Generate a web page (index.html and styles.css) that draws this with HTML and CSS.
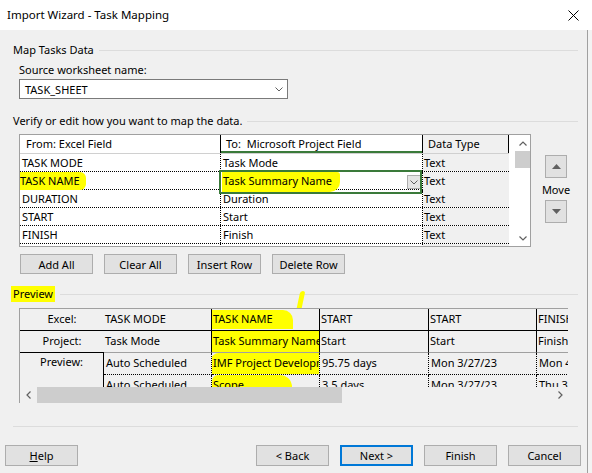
FILE: index.html
```html
<!DOCTYPE html>
<html lang="en">
<head>
    <meta charset="UTF-8">
    <title>Import Wizard - Task Mapping</title>
    <link rel="stylesheet" href="styles.css">
</head>
<body>
    <div class="titlebar">
        <span class="title">Import Wizard - Task Mapping</span>
        <svg class="close" width="11" height="11" viewBox="0 0 11 11"><path d="M0.5 0.5 L10.5 10.5 M10.5 0.5 L0.5 10.5" stroke="#000" stroke-width="1"/></svg>
    </div>

    <div class="dialog">
        <!-- Map Tasks Data -->
        <div class="group-label"><span>Map Tasks Data</span><div class="rule"></div></div>
        <div class="field-label">Source worksheet name:</div>
        <div class="select">
            <span>TASK_SHEET</span>
            <svg width="8" height="5" viewBox="0 0 8 5"><path d="M0.5 0.5 L4 4 L7.5 0.5" fill="none" stroke="#606060"/></svg>
        </div>

        <div class="group-label verify"><span>Verify or edit how you want to map the data.</span><div class="rule"></div></div>

        <div class="map-area">
            <div class="map-grid">
                <div class="map-cols">
                    <div class="map-row head">
                        <div class="cell">From: Excel Field</div>
                        <div class="cell active-col">To:&nbsp; Microsoft Project Field</div>
                        <div class="cell type">Data Type</div>
                    </div>
                    <div class="map-row">
                        <div class="cell">TASK MODE</div>
                        <div class="cell">Task Mode</div>
                        <div class="cell type">Text</div>
                    </div>
                    <div class="map-row">
                        <div class="cell"><span class="hl hl-name">TASK NAME</span></div>
                        <div class="cell selected">
                            <span class="hl hl-summary">Task Summary Name</span>
                            <span class="cell-drop"><svg width="8" height="5" viewBox="0 0 8 5"><path d="M0.5 0.5 L4 4 L7.5 0.5" fill="none" stroke="#606060"/></svg></span>
                        </div>
                        <div class="cell type">Text</div>
                    </div>
                    <div class="map-row">
                        <div class="cell">DURATION</div>
                        <div class="cell">Duration</div>
                        <div class="cell type">Text</div>
                    </div>
                    <div class="map-row">
                        <div class="cell">START</div>
                        <div class="cell">Start</div>
                        <div class="cell type">Text</div>
                    </div>
                    <div class="map-row">
                        <div class="cell">FINISH</div>
                        <div class="cell">Finish</div>
                        <div class="cell type">Text</div>
                    </div>
                    <div class="map-row">
                        <div class="cell"></div>
                        <div class="cell"></div>
                        <div class="cell type"></div>
                    </div>
                </div>
                <div class="vscroll">
                    <div class="arrow"><svg width="8" height="5" viewBox="0 0 8 5"><path d="M0.5 4.5 L4 1 L7.5 4.5" fill="none" stroke="#606060" stroke-width="1.2"/></svg></div>
                    <div class="thumb"></div>
                    <div class="track"></div>
                    <div class="arrow"><svg width="8" height="5" viewBox="0 0 8 5"><path d="M0.5 0.5 L4 4 L7.5 0.5" fill="none" stroke="#606060" stroke-width="1.2"/></svg></div>
                </div>
            </div>

            <div class="move">
                <div class="move-btn"><svg width="9" height="5" viewBox="0 0 9 5"><path d="M0 5 L4.5 0 L9 5 Z" fill="#606060"/></svg></div>
                <div class="move-label">Move</div>
                <div class="move-btn"><svg width="9" height="5" viewBox="0 0 9 5"><path d="M0 0 L4.5 5 L9 0 Z" fill="#606060"/></svg></div>
            </div>
        </div>

        <div class="grid-buttons">
            <button>Add All</button>
            <button>Clear All</button>
            <button>Insert Row</button>
            <button>Delete Row</button>
        </div>

        <!-- Preview -->
        <div class="group-label preview-label"><span class="hl">Preview</span><div class="rule"></div></div>

        <div class="preview-wrap">
            <div class="marker-tick"></div>
            <div class="preview-grid">
                <div class="pv-row excel">
                    <div class="pv-cell label">Excel:</div>
                    <div class="pv-cell">TASK MODE</div>
                    <div class="pv-cell"><span class="hl hl-pv-name">TASK NAME</span></div>
                    <div class="pv-cell">START</div>
                    <div class="pv-cell">START</div>
                    <div class="pv-cell last">FINISH</div>
                </div>
                <div class="pv-row project">
                    <div class="pv-cell label">Project:</div>
                    <div class="pv-cell">Task Mode</div>
                    <div class="pv-cell hl">Task Summary Name</div>
                    <div class="pv-cell">Start</div>
                    <div class="pv-cell">Start</div>
                    <div class="pv-cell last">Finish</div>
                </div>
                <div class="pv-body">
                    <div class="pv-cell label">Preview:</div>
                    <div class="pv-cell">Auto Scheduled</div>
                    <div class="pv-cell"><span class="hl hl-imf">IMF Project Development</span></div>
                    <div class="pv-cell">95.75 days</div>
                    <div class="pv-cell">Mon 3/27/23</div>
                    <div class="pv-cell last">Mon 4/3/23</div>
                    <div class="pv-cell">Auto Scheduled</div>
                    <div class="pv-cell"><span class="hl hl-scope">Scope</span></div>
                    <div class="pv-cell">3.5 days</div>
                    <div class="pv-cell">Mon 3/27/23</div>
                    <div class="pv-cell last">Thu 3/30/23</div>
                </div>
                <div class="hscroll">
                    <div class="arrow"><svg width="5" height="8" viewBox="0 0 5 8"><path d="M4.5 0.5 L1 4 L4.5 7.5" fill="none" stroke="#606060" stroke-width="1.2"/></svg></div>
                    <div class="thumb"></div>
                    <div class="track"></div>
                    <div class="arrow"><svg width="5" height="8" viewBox="0 0 5 8"><path d="M0.5 0.5 L4 4 L0.5 7.5" fill="none" stroke="#606060" stroke-width="1.2"/></svg></div>
                </div>
            </div>
        </div>

        <div class="footer-rule"></div>

        <div class="footer">
            <button><u>H</u>elp</button>
            <button class="back">&lt; Back</button>
            <button class="default">Next &gt;</button>
            <button>Finish</button>
            <button>Cancel</button>
        </div>
    </div>
</body>
</html>
```

FILE: styles.css
```css
body {
    margin: 0;
    width: 592px;
    height: 473px;
    overflow: hidden;
    background: #f3f3f3;
    font-family: "Segoe UI", "Noto Sans", sans-serif;
    font-size: 11px;
    color: #000;
}
.titlebar {
    height: 30px;
    background: #fff;
    display: flex;
    align-items: center;
    justify-content: space-between;
    padding: 0 13px 0 7px;
}
.title {
    font-size: 11.5px;
    line-height: 16px;
}
.close {
    display: block;
}
.dialog {
    width: 588px;
    height: 443px;
    box-sizing: border-box;
    padding: 12px 9px 0 13px;
    background: #f0f0f0;
    border-right: 1px solid #a0a0a0;
}
.group-label {
    display: flex;
    align-items: center;
    height: 16px;
    line-height: 16px;
    white-space: nowrap;
}
.group-label .rule {
    flex: 1;
    height: 1px;
    margin-left: 5px;
    background: #dcdcdc;
}
.field-label {
    margin: 4px 0 0 6px;
    line-height: 16px;
}
.select {
    width: 269px;
    height: 20px;
    box-sizing: border-box;
    margin: 1px 0 0 6px;
    padding: 0 4px 0 5px;
    display: flex;
    align-items: center;
    justify-content: space-between;
    background: #fff;
    border: 1px solid #7a7a7a;
}
.select svg {
    display: block;
}
.verify {
    margin-top: 14px;
}

/* mapping grid */
.map-area {
    display: flex;
    margin: 5px 0 0 6px;
}
.map-grid {
    width: 512px;
    height: 113px;
    box-sizing: border-box;
    display: flex;
    overflow: hidden;
    background: #fff;
    border: 1px solid #a0a0a0;
}
.map-cols {
    width: 489px;
}
.map-row {
    display: grid;
    grid-template-columns: 201px 202px 86px;
    height: 18px;
    box-sizing: border-box;
    border-bottom: 1px dotted #000;
}
.map-row .cell {
    padding-left: 2px;
    line-height: 17px;
    white-space: nowrap;
    border-right: 1px dotted #000;
}
.map-row .cell.type {
    padding-left: 1px;
    background: #f0f0f0;
    border-right: none;
}
.map-row.head {
    height: 19px;
    border-bottom: 1px solid #d0d0d0;
}
.map-row.head .cell {
    padding-left: 5px;
    line-height: 18px;
    border-right: 1px solid #000;
}
.map-row.head .cell:first-child {
    padding-left: 6px;
}
.map-row.head .cell.type {
    padding-left: 5px;
    border-right: 1px solid #000;
}
.map-row.head .active-col {
    box-shadow: inset 0 -2px 0 #3a7a3a;
}
.cell.selected {
    position: relative;
    display: flex;
    align-items: center;
}
.cell.selected::after {
    content: "";
    position: absolute;
    left: -2px;
    top: -2px;
    right: 0;
    bottom: -2px;
    border: 2px solid #3a7a3a;
}
.cell-drop {
    width: 14px;
    height: 14px;
    box-sizing: border-box;
    margin: 0 1px 0 auto;
    display: flex;
    align-items: center;
    justify-content: center;
    background: #e5e5e5;
    border: 1px solid #adadad;
}
.cell-drop svg {
    display: block;
}
.hl {
    background: #ffff00;
}
.hl-name {
    display: inline-block;
    margin-left: -5px;
    padding: 0 6px 1px 3px;
    line-height: 17px;
    border-radius: 3px 6px 6px 4px;
}
.hl-summary {
    display: inline-block;
    margin-left: -1px;
    padding: 0 8px 3px 1px;
    line-height: 17px;
    border-radius: 0 3px 10px 0;
}
.vscroll {
    width: 15px;
    margin-left: 6px;
    display: flex;
    flex-direction: column;
    background: #fff;
}
.vscroll .arrow {
    height: 16px;
    display: flex;
    align-items: center;
    justify-content: center;
}
.vscroll .thumb {
    height: 17px;
    background: #cdcdcd;
}
.vscroll .track {
    flex: 1;
}
.move {
    width: 30px;
    margin-left: 10px;
    padding-top: 21px;
    display: flex;
    flex-direction: column;
    align-items: center;
}
.move-btn {
    width: 22px;
    height: 23px;
    box-sizing: border-box;
    display: flex;
    align-items: center;
    justify-content: center;
    background: #e1e1e1;
    border: 1px solid #adadad;
}
.move-btn svg {
    display: block;
}
.move-label {
    margin: 4px 0 2px;
    line-height: 16px;
}

button {
    width: 73px;
    height: 20px;
    padding: 0;
    box-sizing: border-box;
    font-family: inherit;
    font-size: 11px;
    color: #000;
    background: #e1e1e1;
    border: 1px solid #adadad;
    border-radius: 0;
}
.grid-buttons {
    display: flex;
    gap: 11px;
    margin: 7px 0 0 7px;
}
.preview-label {
    margin-top: 12px;
}
.preview-label .hl {
    margin-left: -2px;
    padding: 0 2px;
}

/* preview grid */
.preview-wrap {
    position: relative;
    margin: 6px 0 0 6px;
}
.marker-tick {
    position: absolute;
    left: 279px;
    top: -17px;
    width: 5px;
    height: 22px;
    background: #ffff00;
    border-radius: 3px;
    transform: skewX(-12deg);
}
.preview-grid {
    position: relative;
    width: 549px;
    height: 95px;
    box-sizing: border-box;
    overflow: hidden;
    background: #f0f0f0;
    border-top: 1px solid #a0a0a0;
    border-left: 1px solid #a0a0a0;
}
.pv-row,
.pv-body {
    display: grid;
    grid-template-columns: 84px 108px 108px 109px 108px 100px;
}
.pv-row {
    height: 22px;
}
.pv-cell {
    box-sizing: border-box;
    padding-left: 1px;
    overflow: hidden;
    white-space: nowrap;
}
.pv-row .pv-cell {
    line-height: 19px;
    border-right: 1px solid #000;
    border-bottom: 1px solid #000;
}
.pv-row .pv-cell.label {
    padding: 0;
    text-align: center;
    border-right: none;
}
.pv-row .pv-cell.last {
    border-right: none;
}
.pv-row.project .pv-cell {
    border-bottom-color: #a0a0a0;
}
.pv-row.project .pv-cell.label {
    border-bottom-color: #000;
}
.pv-body {
    height: 34px;
    grid-auto-rows: 22px;
    overflow: hidden;
}
.pv-body .pv-cell {
    padding-left: 2px;
    line-height: 20px;
    border-right: 1px dotted #000;
    border-bottom: 1px dotted #000;
}
.pv-body .pv-cell.label {
    grid-row: span 2;
    padding: 0;
    line-height: 18px;
    text-align: center;
    border-right: 1px solid #000;
    border-bottom: none;
}
.pv-body .pv-cell.last {
    border-right: none;
}
.hl-pv-name {
    display: inline-block;
    margin-left: -1px;
    padding: 0 20px 1px 1px;
    line-height: 18px;
    border-radius: 0 10px 0 0;
}
.hl-imf {
    display: inline-block;
    margin-left: -3px;
    padding: 0 0 2px 2px;
    line-height: 19px;
    border-radius: 8px 10px 12px 2px;
}
.hl-scope {
    display: inline-block;
    margin-left: -2px;
    padding: 0 48px 0 1px;
    line-height: 20px;
    border-radius: 6px 12px 0 0;
}
.hscroll {
    height: 16px;
    display: flex;
    background: #f0f0f0;
}
.hscroll .arrow {
    width: 16px;
    display: flex;
    align-items: center;
    justify-content: center;
}
.hscroll .thumb {
    width: 305px;
    margin-left: 1px;
    background: #cdcdcd;
}
.hscroll .track {
    flex: 1;
}

/* footer */
.footer-rule {
    height: 1px;
    margin-top: 23px;
    background: #dcdcdc;
}
.footer {
    display: flex;
    gap: 11px;
    margin: 18px -3px 0 -8px;
}
.footer button {
    height: 21px;
}
.footer .back {
    margin-left: auto;
}
.footer .default {
    border: 2px solid #0078d7;
}
```
